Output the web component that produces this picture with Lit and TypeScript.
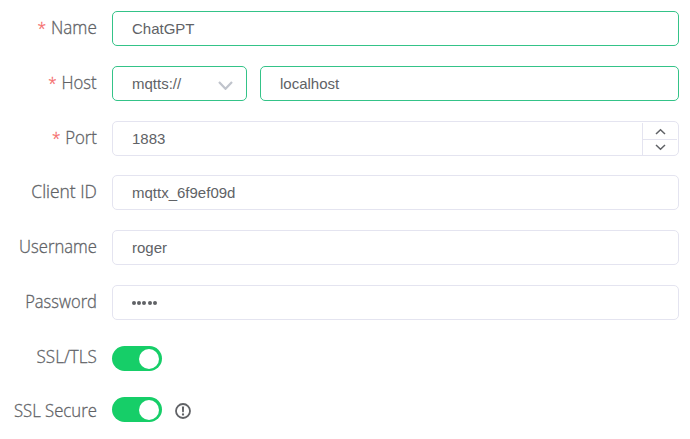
import { LitElement, html, css, svg, nothing } from "lit";
import { customElement } from "lit/decorators.js";
import { classMap } from "lit/directives/class-map.js";
import { styleMap } from "lit/directives/style-map.js";

const chevron = (d: string, w: number, h: number, sw: number) => html`
  <svg width=${w} height=${h} viewBox="0 0 ${w} ${h}" fill="none" stroke="currentColor" stroke-width=${sw}>
    ${svg`<path d=${d} />`}
  </svg>`;

@customElement("app-root")
export class AppRoot extends LitElement {
  static styles = css`
    :host {
      display: block;
      height: 439px;
      overflow: hidden;
      background: #fff;
      color: #606266;
      font-family: "Liberation Sans", Arial, sans-serif;
      font-size: 15px;
    }
    .form {
      box-sizing: border-box;
      height: 439px;
      padding: 11px 11px 0 0;
      display: grid;
      grid-template-rows: 55px 55px 54px 55px 55px 61px 51px 40px;
    }
    .row {
      display: grid;
      grid-template-columns: 97px 1fr;
      column-gap: 15px;
      align-items: start;
    }
    .label {
      display: flex;
      justify-content: flex-end;
      height: 35px;
      line-height: 33px;
      font-family: "Open Sans", "Noto Sans", sans-serif;
      font-size: 17.5px;
      font-weight: 300;
      -webkit-text-stroke: 0.3px currentColor;
      white-space: nowrap;
    }
    .low { height: 25px; line-height: 21px; }
    .lower { height: 25px; line-height: 27px; }
    .name { transform-origin: right center; }
    .star { color: #f56c6c; margin-right: 5px; font-size: 16px; }
    .content { display: flex; align-items: center; }
    .input {
      box-sizing: border-box;
      height: 35px;
      flex: 1;
      display: flex;
      align-items: center;
      border: 1px solid #e4e4f0;
      border-radius: 5px;
      padding-left: 19px;
      background: #fff;
    }
    .active { border-color: #34c388; }
    .select {
      flex: 0 0 135px;
      margin-right: 13px;
      padding-right: 13px;
      justify-content: space-between;
    }
    .select svg { color: #c0c4cc; margin-top: 4px; }
    .stepper {
      margin: 1px 1px 0 auto;
      width: 35px;
      height: 32px;
      box-sizing: border-box;
      border-left: 1px solid #e4e4f0;
      display: grid;
      grid-template-rows: 17px 15px;
    }
    .step { display: grid; place-items: center; }
    .step:first-child { border-bottom: 1px solid #e4e4f0; padding-top: 1px; }
    .dots { display: flex; gap: 1.2px; }
    .dot { width: 4px; height: 4px; border-radius: 50%; background: #606266; }
    .switch {
      box-sizing: border-box;
      width: 50px;
      height: 25px;
      border-radius: 13px;
      background: #16ce68;
      padding: 0 3px;
      display: flex;
      align-items: center;
      justify-content: flex-end;
    }
    .knob { width: 20px; height: 20px; border-radius: 50%; background: #fff; }
    .info { margin: 2px 0 0 13px; display: block; }
  `;

  private field(value: unknown, cls: Record<string, boolean> = {}, extra: unknown = nothing) {
    return html`<div class=${classMap({ input: true, ...cls })}><span>${value}</span>${extra}</div>`;
  }

  private row(name: string, scale: number, content: unknown, required = false, cls = "") {
    return html`<div class="row">
      <div class="label ${cls}">
        <span class="name" style=${styleMap({ transform: `scaleX(${scale})` })}
          >${required ? html`<span class="star">*</span>` : nothing}${name}</span>
      </div>
      <div class="content">${content}</div>
    </div>`;
  }

  render() {
    const toggle = html`<div class="switch"><div class="knob"></div></div>`;
    const stepper = html`<div class="stepper">
      <div class="step">${chevron("M1 6 L5.5 1.7 L10 6", 11, 7, 1.5)}</div>
      <div class="step">${chevron("M1 1 L5.5 5.3 L10 1", 11, 7, 1.5)}</div>
    </div>`;
    return html`<div class="form">
      ${this.row("Name", 0.975, this.field("ChatGPT", { active: true }), true)}
      ${this.row("Host", 0.955, html`
        ${this.field("mqtts://", { active: true, select: true }, chevron("M1 1 L7.5 7.8 L14 1", 15, 9, 2.2))}
        ${this.field("localhost", { active: true })}`, true)}
      ${this.row("Port", 0.96, this.field("1883", {}, stepper), true)}
      ${this.row("Client ID", 0.995, this.field("mqttx_6f9ef09d"))}
      ${this.row("Username", 0.95, this.field("roger"))}
      ${this.row("Password", 0.945, this.field(html`<span class="dots">${[1, 2, 3, 4, 5].map(() => html`<i class="dot"></i>`)}</span>`))}
      ${this.row("SSL/TLS", 0.975, toggle, false, "low")}
      ${this.row("SSL Secure", 0.955, html`${toggle}
        <svg class="info" width="16" height="16" viewBox="0 0 16 16">
          <circle cx="8" cy="8" r="7" fill="none" stroke="#606266" stroke-width="1.8" />
          <path d="M6.9 3.5h2.2l-.3 5.8H7.2z" fill="#606266" />
          <circle cx="8" cy="11.5" r="1.15" fill="#606266" />
        </svg>`, false, "lower")}
    </div>`;
  }
}
